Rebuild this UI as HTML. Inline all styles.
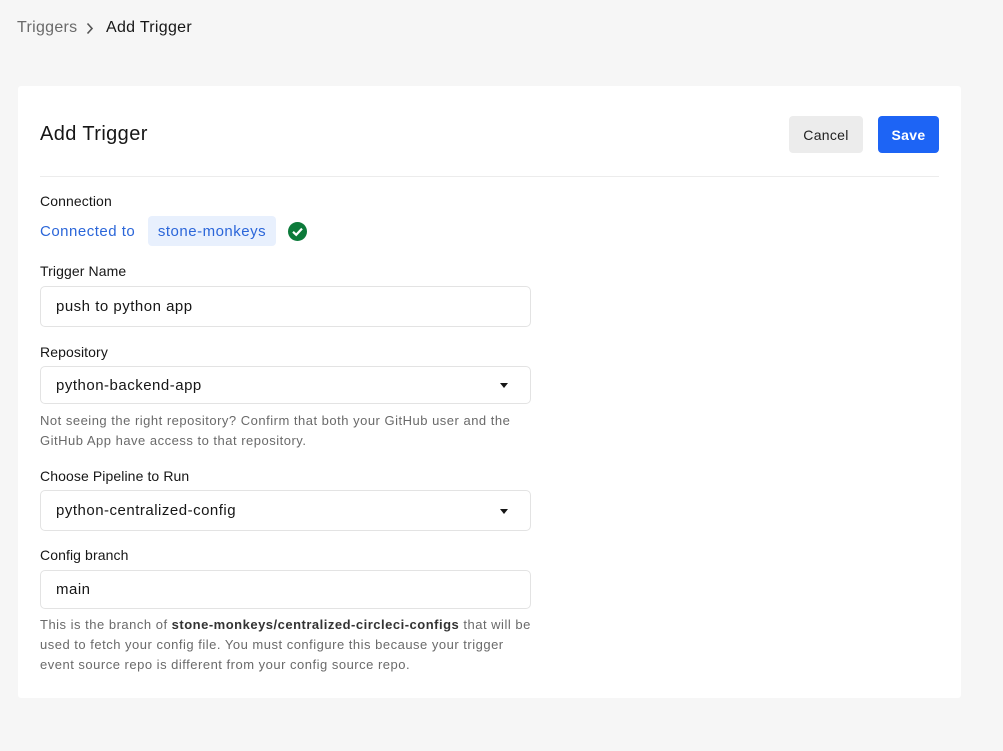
<!DOCTYPE html>
<html><head><meta charset="utf-8"><style>
*{margin:0;padding:0;box-sizing:border-box}
body{width:1003px;height:751px;background:#f6f6f6;font-family:"Liberation Sans",sans-serif;position:relative;overflow:hidden;color:#161616}
.a{position:absolute;white-space:nowrap}
.card{position:absolute;left:18px;top:86px;width:943px;height:612px;background:#fff;border-radius:3px}
.lbl{font-size:14px;color:#161616;letter-spacing:0.1px}
.inp{position:absolute;left:40px;width:491px;border:1px solid #e3e3e3;border-radius:5px;background:#fff;font-size:15px;padding-left:15px;display:flex;align-items:center;letter-spacing:0.5px}
.help{font-size:13px;color:#6a6a6a;line-height:20px;letter-spacing:0.5px}
.caret{position:absolute;right:22px;top:50%;margin-top:-2px;width:0;height:0;border-left:4.5px solid transparent;border-right:4.5px solid transparent;border-top:5px solid #161616}
</style></head><body>
<div class="a" style="left:17px;top:19px;font-size:16px;color:#6a6a6a;letter-spacing:0.3px">Triggers</div>
<svg class="a" style="left:86px;top:22px" width="8" height="13" viewBox="0 0 8 13"><path d="M1.5 1.5 L6 6.5 L1.5 11.5" fill="none" stroke="#555" stroke-width="1.6"/></svg>
<div class="a" style="left:106px;top:19px;font-size:16px;color:#161616;letter-spacing:0.3px">Add Trigger</div>
<div class="card"></div>
<div class="a" style="left:40px;top:123px;font-size:20px;letter-spacing:0.4px">Add Trigger</div>
<div class="a" style="left:789px;top:116px;width:74px;height:37px;background:#ececec;border-radius:4px;font-size:14px;display:flex;align-items:center;justify-content:center;color:#222;letter-spacing:0.3px">Cancel</div>
<div class="a" style="left:878px;top:116px;width:61px;height:37px;background:#1d64f5;border-radius:4px;font-size:14px;font-weight:600;display:flex;align-items:center;justify-content:center;color:#fff;letter-spacing:0.3px">Save</div>
<div class="a" style="left:40px;top:176px;width:899px;height:1px;background:#ececec"></div>
<div class="a lbl" style="left:40px;top:193px">Connection</div>
<div class="a" style="left:40px;top:223px;font-size:15px;color:#2b66d9;letter-spacing:0.5px">Connected to</div>
<div class="a" style="left:148px;top:216px;width:128px;height:30px;background:#e8f0fd;border-radius:4px;font-size:15px;color:#2b66d9;display:flex;align-items:center;justify-content:center;letter-spacing:0.5px">stone-monkeys</div>
<svg class="a" style="left:288px;top:222px" width="19" height="19" viewBox="0 0 19 19"><circle cx="9.5" cy="9.5" r="9.5" fill="#0c7a3a"/><path d="M5 9.8 L8.2 12.8 L14 6.6" fill="none" stroke="#fff" stroke-width="2.2"/></svg>
<div class="a lbl" style="left:40px;top:263px">Trigger Name</div>
<div class="inp" style="top:286px;height:41px">push to python app</div>
<div class="a lbl" style="left:40px;top:344px">Repository</div>
<div class="inp" style="top:366px;height:38px">python-backend-app<span class="caret"></span></div>
<div class="a help" style="left:40px;top:411px">Not seeing the right repository? Confirm that both your GitHub user and the<br>GitHub App have access to that repository.</div>
<div class="a lbl" style="left:40px;top:468px">Choose Pipeline to Run</div>
<div class="inp" style="top:490px;height:41px">python-centralized-config<span class="caret"></span></div>
<div class="a lbl" style="left:40px;top:547px">Config branch</div>
<div class="inp" style="top:570px;height:39px">main</div>
<div class="a help" style="left:40px;top:615px">This is the branch of <b style="color:#333">stone-monkeys/centralized-circleci-configs</b> that will be<br>used to fetch your config file. You must configure this because your trigger<br>event source repo is different from your config source repo.</div>
</body></html>
